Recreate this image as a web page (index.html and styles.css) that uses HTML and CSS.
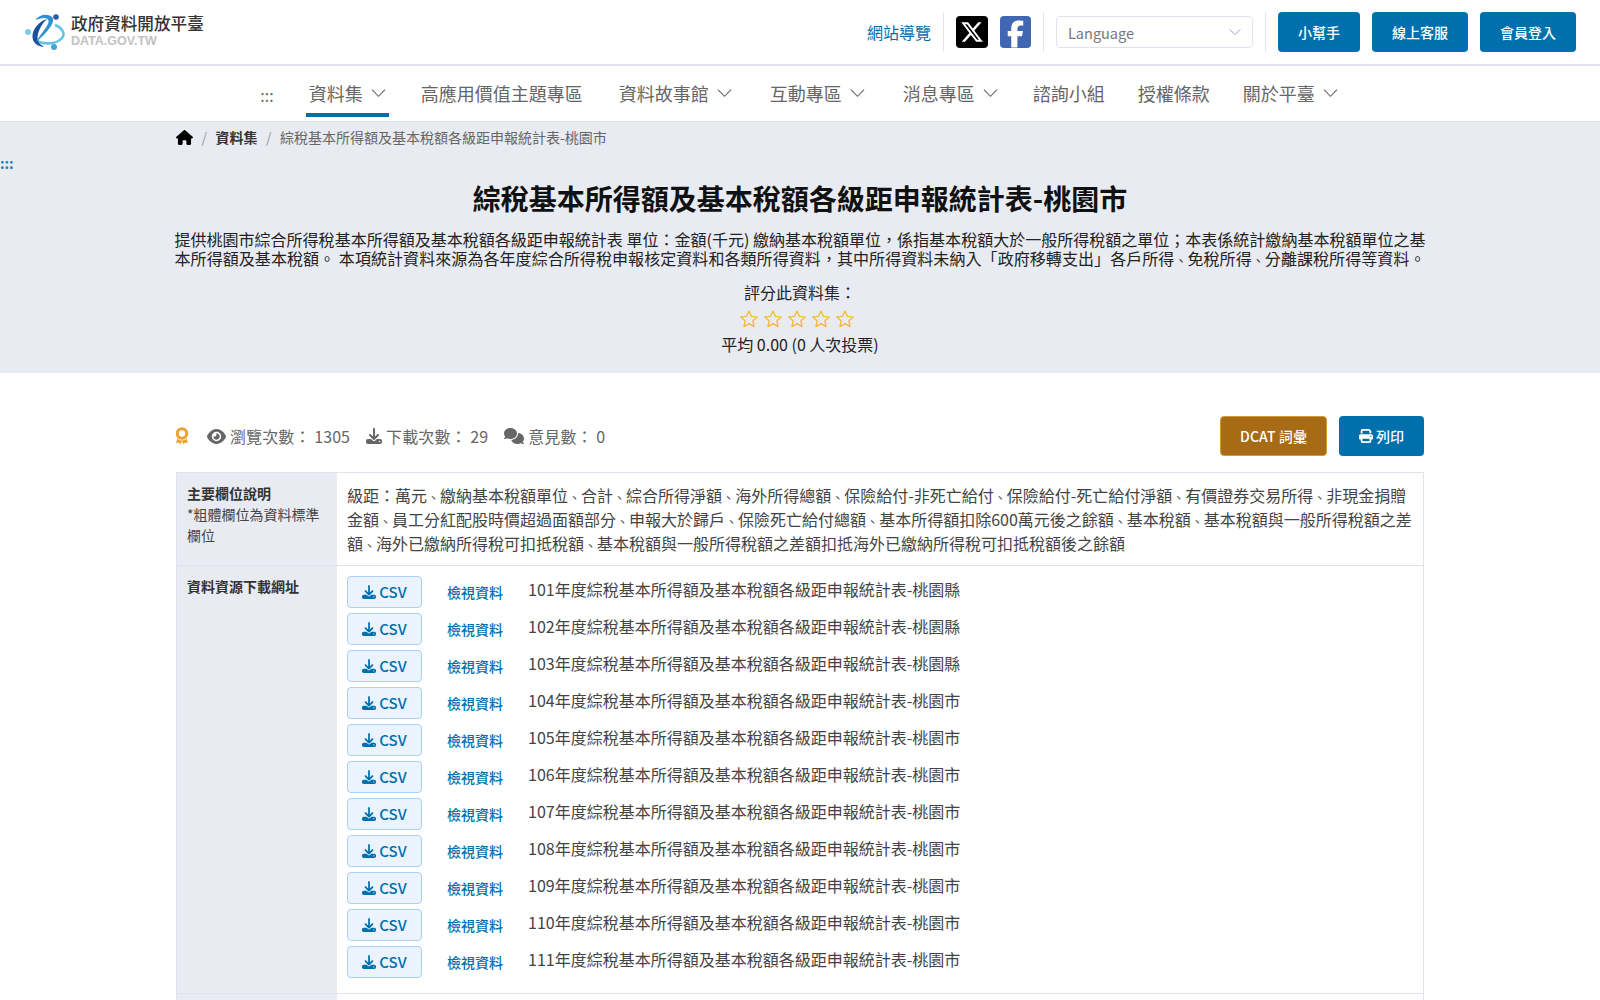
FILE: index.html
```html
<!DOCTYPE html>
<html lang="zh-Hant">
<head>
<meta charset="utf-8">
<title>綜稅基本所得額及基本稅額各級距申報統計表-桃園市</title>
<link rel="stylesheet" href="styles.css">
</head>
<body>
<svg class="defs" aria-hidden="true">
  <symbol id="i-down" viewBox="0 0 512 512"><path d="M288 32c0-17.700-14.300-32-32-32s-32 14.300-32 32V274.700l-73.400-73.400c-12.500-12.500-32.800-12.500-45.300 0s-12.500 32.800 0 45.300l128 128c12.500 12.500 32.800 12.500 45.300 0l128-128c12.500-12.500 12.500-32.800 0-45.300s-32.800-12.500-45.300 0L288 274.700V32zM64 352c-35.300 0-64 28.700-64 64v32c0 35.300 28.700 64 64 64H448c35.300 0 64-28.700 64-64V416c0-35.300-28.700-64-64-64H346.500l-45.300 45.300c-25 25-65.500 25-90.500 0L165.500 352H64zm368 56a24 24 0 1 1 0 48 24 24 0 1 1 0-48z"/></symbol>
  <symbol id="i-chev" viewBox="0 0 16 10"><path d="M1 1.500l7 7 7-7" fill="none" stroke="currentColor" stroke-width="1.200"/></symbol>
  <symbol id="i-star" viewBox="0 0 24 24"><path d="M12 2.500l2.900 6.300 6.900.8-5.100 4.700 1.400 6.800L12 17.600l-6.100 3.500 1.400-6.800-5.100-4.700 6.900-.8z" fill="none" stroke="#f5b82e" stroke-width="1.500" stroke-linejoin="round"/></symbol>
</svg>

<header class="top">
  <a class="logo" href="#">
    <svg class="logo-mark" viewBox="0 0 42 38">
      <path d="M13 28c8 4 20 3 25-3 4-5-1-11-7-13" fill="none" stroke="#62c4e8" stroke-width="2.600"/>
      <path d="M23 6C14 9 8 17 8.500 24c.4 6 5 9.500 12 10-4-2-7.500-5-7-10 .6-6 4-13 9.500-18z" fill="#1d4f9f"/>
      <path d="M11 7c4-5 12-7 17-3 2 2 1 6-1 9-5 7-10 12-15 16 3-6 9-12 12-18 2-4-1-6-4-6-3 0-6 1-9 2z" fill="#2f8fd0"/>
      <circle cx="32" cy="4" r="2.800" fill="#2b5ca8"/>
      <circle cx="4" cy="19" r="3" fill="#7fcbee"/>
      <circle cx="30" cy="34" r="3" fill="#3fa3dc"/>
    </svg>
    <span class="logo-text">
      <span class="logo-zh">政府資料開放平臺</span>
      <span class="logo-en">DATA.GOV.TW</span>
    </span>
  </a>
  <div class="top-tools">
    <a class="sitemap" href="#">網站導覽</a>
    <span class="sep"></span>
    <a class="social social-x" href="#" aria-label="X"><svg viewBox="0 0 512 512"><path d="M389.200 48h70.600L305.600 224.200 487 464H345L233.700 318.600 106.500 464H35.800L200.700 275.500 26.800 48H172.400L272.900 180.900 389.200 48zM364.400 421.800h39.100L151.100 88h-42L364.400 421.800z"/></svg></a>
    <a class="social social-fb" href="#" aria-label="Facebook"><svg viewBox="0 0 320 512"><path d="M80 299.300V512H196V299.300h86.500l18-97.800H196V166.900c0-51.700 20.300-71.500 72.700-71.500c16.300 0 29.400 .4 37 1.200V7.900C291.400 4 256.400 0 236.200 0C129.300 0 80 50.500 80 159.400v42.100H14v97.800H80z"/></svg></a>
    <span class="sep"></span>
    <div class="lang"><span>Language</span><svg class="chev-sm"><use href="#i-chev"/></svg></div>
    <span class="sep"></span>
    <a class="btn btn-help" href="#">小幫手</a>
    <a class="btn" href="#">線上客服</a>
    <a class="btn" href="#">會員登入</a>
  </div>
</header>

<nav class="nav">
  <span class="nav-dots">:::</span>
  <a class="nav-item current" href="#">資料集<svg class="chev"><use href="#i-chev"/></svg></a>
  <a class="nav-item nav-wide" href="#">高應用價值主題專區</a>
  <a class="nav-item has-sub" href="#">資料故事館<svg class="chev"><use href="#i-chev"/></svg></a>
  <a class="nav-item has-sub" href="#">互動專區<svg class="chev"><use href="#i-chev"/></svg></a>
  <a class="nav-item has-sub nav-tight" href="#">消息專區<svg class="chev"><use href="#i-chev"/></svg></a>
  <a class="nav-item" href="#">諮詢小組</a>
  <a class="nav-item" href="#">授權條款</a>
  <a class="nav-item has-sub" href="#">關於平臺<svg class="chev"><use href="#i-chev"/></svg></a>
</nav>

<section class="hero">
  <div class="wrap crumbs">
    <a href="#" aria-label="首頁"><svg class="home" viewBox="0 0 576 512"><path d="M575.800 255.500c0 18-15 32.100-32 32.100h-32l.7 160.200c0 2.700-.2 5.400-.5 8.100V472c0 22.100-17.900 40-40 40H456c-1.100 0-2.200 0-3.300-.1c-1.400 .1-2.800 .1-4.200 .1H416 392c-22.100 0-40-17.900-40-40V448 384c0-17.700-14.300-32-32-32H256c-17.700 0-32 14.300-32 32v64 24c0 22.100-17.900 40-40 40H160 128.100c-1.500 0-3-.1-4.500-.2c-1.200 .1-2.400 .2-3.600 .2H104c-22.100 0-40-17.900-40-40V360c0-.9 0-1.900 .1-2.800V287.600H32c-18 0-32-14-32-32.100c0-9 3-17 10-24L266.400 8c7-7 15-8 22-8s15 2 21 7L564.800 231.500c8 7 12 15 11 24z"/></svg></a>
    <span class="slash">/</span>
    <a class="crumb-strong" href="#">資料集</a>
    <span class="slash">/</span>
    <span class="crumb-now">綜稅基本所得額及基本稅額各級距申報統計表-桃園市</span>
  </div>
  <span class="side-dots">:::</span>
  <div class="wrap hero-body">
    <h1>綜稅基本所得額及基本稅額各級距申報統計表-桃園市</h1>
    <p class="desc">提供桃園市綜合所得稅基本所得額及基本稅額各級距申報統計表 單位：金額(千元) 繳納基本稅額單位，係指基本稅額大於一般所得稅額之單位；本表係統計繳納基本稅額單位之基本所得額及基本稅額。 本項統計資料來源為各年度綜合所得稅申報核定資料和各類所得資料，其中所得資料未納入「政府移轉支出」各戶所得<span class="dun">、</span>免稅所得<span class="dun">、</span>分離課稅所得等資料。</p>
    <div class="rate-label">評分此資料集：</div>
    <div class="stars">
      <svg><use href="#i-star"/></svg><svg><use href="#i-star"/></svg><svg><use href="#i-star"/></svg><svg><use href="#i-star"/></svg><svg><use href="#i-star"/></svg>
    </div>
    <div class="rate-avg">平均 0.00 (0 人次投票)</div>
  </div>
</section>

<main class="wrap">
  <div class="stats">
    <svg class="award" viewBox="0 0 14 18"><circle cx="7" cy="6.500" r="4.700" fill="none" stroke="#eda12f" stroke-width="3"/><path d="M2.500 11.500L1 16l3-.4 1.500 2 1.500-3.600 1.500 3.600 1.500-2 3 .4-1.500-4.500C10 14 4 14 2.500 11.500z" fill="#eda12f"/></svg>
    <span class="stat"><svg class="ic-eye" viewBox="0 0 576 512"><path d="M288 32c-80.800 0-145.500 36.800-192.600 80.600C48.600 156 17.300 208 2.500 243.700c-3.300 7.900-3.300 16.700 0 24.600C17.300 304 48.600 356 95.400 399.400C142.500 443.200 207.200 480 288 480s145.500-36.800 192.600-80.600c46.800-43.500 78.100-95.400 93-131.100c3.300-7.900 3.300-16.700 0-24.600c-14.900-35.700-46.200-87.700-93-131.100C433.500 68.800 368.800 32 288 32zM144 256a144 144 0 1 1 288 0 144 144 0 1 1 -288 0zm144-64c0 35.300-28.700 64-64 64c-7.100 0-13.900-1.200-20.300-3.300c-5.500-1.800-11.900 1.600-11.700 7.400c.3 6.900 1.300 13.800 3.200 20.700c13.700 51.200 66.400 81.600 117.600 67.900s81.600-66.400 67.900-117.600c-11.100-41.500-47.800-69.400-88.600-71.100c-5.800-.2-9.200 6.100-7.400 11.700c2.100 6.400 3.300 13.200 3.300 20.300z"/></svg>瀏覽次數： 1305</span>
    <span class="stat"><svg class="ic-dl"><use href="#i-down"/></svg>下載次數： 29</span>
    <span class="stat"><svg class="ic-cm" viewBox="0 0 640 512"><path d="M208 352c114.900 0 208-78.800 208-176S322.900 0 208 0S0 78.800 0 176c0 38.600 14.700 74.300 39.600 103.400c-3.500 9.400-8.700 17.700-14.200 24.700c-4.800 6.200-9.700 11-13.300 14.300c-1.800 1.600-3.300 2.900-4.300 3.700c-.5 .4-.9 .7-1.100 .8l-.2 .2 0 0 0 0C1 327.200-1.400 334.400 .8 340.900S9.100 352 16 352c21.800 0 43.800-5.600 62.100-12.500c9.200-3.500 17.800-7.400 25.300-11.400C134.100 343.300 169.800 352 208 352zM448 176c0 112.300-99.100 196.900-216.500 207C255.800 457.700 336.100 512 432 512c38.200 0 73.900-8.700 104.700-23.900c7.500 4 16 7.900 25.200 11.400c18.300 6.900 40.300 12.500 62.100 12.500c6.900 0 13.100-4.500 15.200-11.100c2.100-6.600-.2-13.800-5.800-17.900l0 0 0 0-.2-.2c-.2-.2-.6-.4-1.100-.8c-1-.8-2.500-2-4.300-3.700c-3.600-3.300-8.500-8.100-13.300-14.300c-5.500-7-10.700-15.400-14.200-24.700c24.900-29 39.600-64.700 39.600-103.400c0-92.800-84.900-168.900-192.600-175.500c.4 5.100 .6 10.300 .6 15.500z"/></svg>意見數： 0</span>
    <span class="stats-gap"></span>
    <a class="btn btn-dcat" href="#">DCAT 詞彙</a>
    <a class="btn btn-print" href="#"><svg viewBox="0 0 512 512"><path d="M128 0C92.700 0 64 28.700 64 64v96h64V64H354.700L384 93.300V160h64V93.300c0-17-6.700-33.300-18.700-45.300L400 18.700C388 6.700 371.700 0 354.700 0H128zM384 352v32 64H128V384 368 352H384zm64 32h32c17.700 0 32-14.300 32-32V256c0-35.300-28.700-64-64-64H64c-35.300 0-64 28.700-64 64v96c0 17.700 14.300 32 32 32H64v64c0 35.300 28.700 64 64 64H384c35.300 0 64-28.700 64-64V384zM432 248a24 24 0 1 1 0 48 24 24 0 1 1 0-48z"/></svg>列印</a>
  </div>

  <div class="info">
    <div class="info-row">
      <div class="info-head"><strong>主要欄位說明</strong><br>*粗體欄位為資料標準欄位</div>
      <div class="info-cell">級距：萬元<span class="dun">、</span>繳納基本稅額單位<span class="dun">、</span>合計<span class="dun">、</span>綜合所得淨額<span class="dun">、</span>海外所得總額<span class="dun">、</span>保險給付-非死亡給付<span class="dun">、</span>保險給付-死亡給付淨額<span class="dun">、</span>有價證券交易所得<span class="dun">、</span>非現金捐贈金額<span class="dun">、</span>員工分紅配股時價超過面額部分<span class="dun">、</span>申報大於歸戶<span class="dun">、</span>保險死亡給付總額<span class="dun">、</span>基本所得額扣除600萬元後之餘額<span class="dun">、</span>基本稅額<span class="dun">、</span>基本稅額與一般所得稅額之差額<span class="dun">、</span>海外已繳納所得稅可扣抵稅額<span class="dun">、</span>基本稅額與一般所得稅額之差額扣抵海外已繳納所得稅可扣抵稅額後之餘額</div>
    </div>
    <div class="info-row">
      <div class="info-head"><strong>資料資源下載網址</strong></div>
      <div class="info-cell res-list">
        <div class="res"><a class="csv" href="#"><svg><use href="#i-down"/></svg>CSV</a><a class="view" href="#">檢視資料</a><span class="res-name">101年度綜稅基本所得額及基本稅額各級距申報統計表-桃園縣</span></div>
        <div class="res"><a class="csv" href="#"><svg><use href="#i-down"/></svg>CSV</a><a class="view" href="#">檢視資料</a><span class="res-name">102年度綜稅基本所得額及基本稅額各級距申報統計表-桃園縣</span></div>
        <div class="res"><a class="csv" href="#"><svg><use href="#i-down"/></svg>CSV</a><a class="view" href="#">檢視資料</a><span class="res-name">103年度綜稅基本所得額及基本稅額各級距申報統計表-桃園縣</span></div>
        <div class="res"><a class="csv" href="#"><svg><use href="#i-down"/></svg>CSV</a><a class="view" href="#">檢視資料</a><span class="res-name">104年度綜稅基本所得額及基本稅額各級距申報統計表-桃園市</span></div>
        <div class="res"><a class="csv" href="#"><svg><use href="#i-down"/></svg>CSV</a><a class="view" href="#">檢視資料</a><span class="res-name">105年度綜稅基本所得額及基本稅額各級距申報統計表-桃園市</span></div>
        <div class="res"><a class="csv" href="#"><svg><use href="#i-down"/></svg>CSV</a><a class="view" href="#">檢視資料</a><span class="res-name">106年度綜稅基本所得額及基本稅額各級距申報統計表-桃園市</span></div>
        <div class="res"><a class="csv" href="#"><svg><use href="#i-down"/></svg>CSV</a><a class="view" href="#">檢視資料</a><span class="res-name">107年度綜稅基本所得額及基本稅額各級距申報統計表-桃園市</span></div>
        <div class="res"><a class="csv" href="#"><svg><use href="#i-down"/></svg>CSV</a><a class="view" href="#">檢視資料</a><span class="res-name">108年度綜稅基本所得額及基本稅額各級距申報統計表-桃園市</span></div>
        <div class="res"><a class="csv" href="#"><svg><use href="#i-down"/></svg>CSV</a><a class="view" href="#">檢視資料</a><span class="res-name">109年度綜稅基本所得額及基本稅額各級距申報統計表-桃園市</span></div>
        <div class="res"><a class="csv" href="#"><svg><use href="#i-down"/></svg>CSV</a><a class="view" href="#">檢視資料</a><span class="res-name">110年度綜稅基本所得額及基本稅額各級距申報統計表-桃園市</span></div>
        <div class="res"><a class="csv" href="#"><svg><use href="#i-down"/></svg>CSV</a><a class="view" href="#">檢視資料</a><span class="res-name">111年度綜稅基本所得額及基本稅額各級距申報統計表-桃園市</span></div>
      </div>
    </div>
    <div class="info-row info-empty">
      <div class="info-head"></div>
      <div class="info-cell"></div>
    </div>
  </div>
</main>
</body>
</html>
```

FILE: styles.css
```css
* {
  box-sizing: border-box;
}
body {
  margin: 0;
  background: #fff;
  color: #333;
  font-family: "Noto Sans CJK TC", "Noto Sans", sans-serif;
  font-size: 16px;
}
a {
  color: inherit;
  text-decoration: none;
}
.defs {
  display: none;
}
.wrap {
  width: 1248px;
  margin: 0 auto;
}
.dun {
  font-size: 13px;
  line-height: 1;
}

/* top bar */
.top {
  height: 66px;
  padding: 12px 24px;
  display: flex;
  justify-content: space-between;
  border-bottom: 2px solid #dfe2ea;
}
.logo {
  display: flex;
  align-items: center;
  height: 40px;
}
.logo-mark {
  width: 42px;
  height: 38px;
  margin-right: 5px;
}
.logo-text {
  display: flex;
  flex-direction: column;
  padding-bottom: 3px;
}
.logo-zh {
  font-size: 16.600px;
  font-weight: 500;
  line-height: 20px;
  color: #333;
}
.logo-en {
  margin-top: 2px;
  font: bold 12.500px/13px "Liberation Sans", sans-serif;
  color: #c2c2c2;
}
.top-tools {
  display: flex;
  align-items: center;
  height: 40px;
}
.sitemap {
  color: #0070ad;
  margin-right: 12px;
}
.sep {
  width: 1px;
  height: 40px;
  background: #e3e5ea;
}
.social {
  width: 32px;
  height: 32px;
  border-radius: 4px;
  display: flex;
  align-items: center;
  justify-content: center;
}
.social-x {
  background: #000;
  margin-left: 12px;
}
.social-x svg {
  width: 24px;
  height: 24px;
  fill: #fff;
}
.social-fb {
  width: 31px;
  background: #4267b2;
  margin: 0 12px;
  align-items: flex-end;
}
.social-fb svg {
  width: 17px;
  height: 28px;
  fill: #fff;
}
.lang {
  width: 197px;
  height: 32px;
  margin: 0 12px;
  padding: 0 11px;
  border: 1px solid #dfe2ea;
  border-radius: 4px;
  display: flex;
  align-items: center;
  justify-content: space-between;
  color: #777;
  font-size: 14.500px;
}
.chev-sm {
  width: 12px;
  height: 8px;
  color: #999;
}
.btn {
  height: 40px;
  background: #0070ad;
  color: #fff;
  border-radius: 4px;
  font-size: 14px;
  font-weight: 500;
  display: flex;
  align-items: center;
  justify-content: center;
  width: 96px;
  margin-left: 12px;
}
.btn-help {
  width: 82px;
}

/* main menu */
.nav {
  height: 56px;
  border-bottom: 1px solid #dfe2ea;
  display: flex;
  justify-content: center;
  gap: 27px;
  color: #666;
  font-size: 18px;
}
.nav-dots {
  line-height: 58px;
  font-size: 16px;
  margin: 0 5px 0 6px;
}
.nav-item {
  height: 51px;
  padding: 2px 3px 0;
  display: flex;
  align-items: center;
}
.nav-item.has-sub {
  padding-right: 8px;
}
.nav-wide {
  margin-right: 3px;
}
.nav-tight {
  margin-right: -3px;
}
.nav-item.current {
  border-bottom: 4px solid #0070ad;
  padding-top: 6px;
  margin-right: 2px;
}
.chev {
  width: 15px;
  height: 10px;
  margin-left: 8px;
  color: #666;
}

/* grey title block */
.hero {
  background: #e8ebf1;
  height: 251px;
  position: relative;
}
.crumbs {
  height: 30px;
  display: flex;
  align-items: center;
  font-size: 14px;
  color: #666;
}
.home {
  display: block;
  width: 17px;
  height: 15px;
  fill: #000;
}
.slash {
  color: #999;
  margin: 0 8.500px;
}
.crumb-strong {
  color: #333;
  font-weight: 700;
}
.side-dots {
  position: absolute;
  left: 0;
  top: 31px;
  font-size: 14px;
  line-height: 20px;
  font-weight: 700;
  color: #0a82c2;
}
.hero-body {
  text-align: center;
}
.hero h1 {
  margin: 26px 0 0;
  font-size: 28px;
  line-height: 40px;
  font-weight: 700;
  color: #111;
}
.desc {
  margin: 12px -1.500px 0;
  font-size: 16px;
  line-height: 18.500px;
  text-align: justify;
  text-align-last: justify;
  color: #222;
}
.rate-label {
  margin-top: 13px;
  line-height: 24px;
  color: #222;
}
.stars {
  height: 26px;
  margin-top: 1px;
  padding-right: 6px;
  display: flex;
  justify-content: center;
  gap: 4px;
}
.stars svg {
  width: 20px;
  height: 20px;
  margin-top: 4px;
}
.rate-avg {
  line-height: 26px;
  color: #222;
}

/* counters */
.stats {
  height: 99px;
  padding-top: 43px;
  display: flex;
  color: #666;
  line-height: 40px;
  letter-spacing: .1px;
}
.stat {
  display: flex;
  align-items: center;
  height: 40px;
  margin-right: 16px;
  white-space: pre;
}
.award {
  width: 14px;
  height: 18px;
  margin: 11px 18px 0 -1px;
}
.stat svg {
  fill: #666;
  margin-right: 4px;
}
.ic-eye {
  width: 19px;
  height: 17px;
}
.ic-dl {
  width: 16px;
  height: 16px;
}
.ic-cm {
  width: 20px;
  height: 16px;
}
.stats-gap {
  flex: 1;
}
.btn-dcat {
  width: 107px;
  margin-left: 0;
  background: #a66b14;
  border: 1px solid #d9972f;
}
.btn-print {
  width: 85px;
}
.btn-print svg {
  width: 14px;
  height: 14px;
  fill: #fff;
  margin-right: 3px;
}

/* info table */
.info {
  border: 1px solid #dfe2ea;
  border-bottom: 0;
}
.info-row {
  display: flex;
  border-bottom: 1px solid #dfe2ea;
}
.info-head {
  width: 160px;
  flex: none;
  background: #e8ebf1;
  padding: 10px;
  font-size: 14px;
  line-height: 21px;
  color: #444;
}
.info-head strong {
  color: #333;
}
.info-cell {
  flex: 1;
  padding: 10px;
  line-height: 24px;
  color: #444;
}
.res {
  height: 32px;
  margin-bottom: 5px;
  display: flex;
}
.csv {
  width: 75px;
  height: 32px;
  border: 1px solid #a9d0f5;
  border-radius: 4px;
  background: #eaf3fe;
  color: #0070ad;
  font-size: 15px;
  font-weight: 500;
  display: flex;
  align-items: center;
  justify-content: center;
}
.csv svg {
  width: 14px;
  height: 14px;
  fill: #0070ad;
  margin-right: 3px;
}
.view {
  padding-left: 25px;
  box-sizing: content-box;
  width: 56px;
  color: #0070ad;
  font-size: 14px;
  font-weight: 500;
  line-height: 33px;
}
.res-name {
  margin-left: 25px;
  line-height: 27px;
}
.info-empty {
  height: 60px;
}
```
